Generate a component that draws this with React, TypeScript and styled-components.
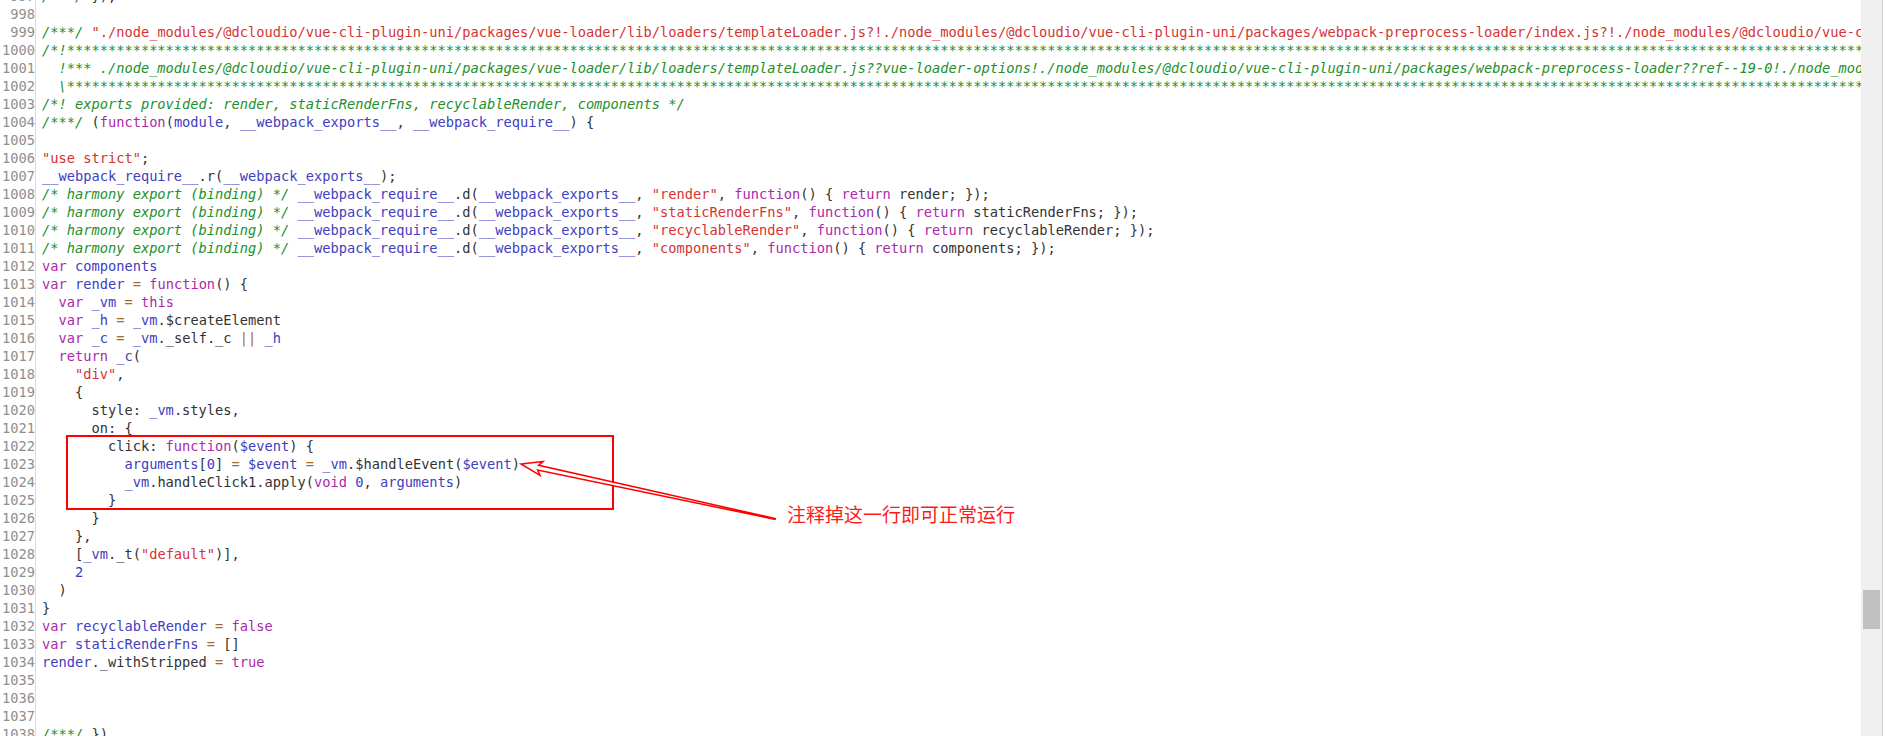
import React from "react";
import styled, { createGlobalStyle } from "styled-components";

type Kind = "p" | "c" | "s" | "k" | "v" | "o" | "n";
type Tok = [Kind, string];

const GlobalStyle = createGlobalStyle`
  html, body { margin: 0; padding: 0; background: #ffffff; overflow: hidden; }
  #root { width: 100vw; height: 100vh; }
`;

const COLORS: Record<Kind, string> = {
  p: "#333333",
  c: "#22902a",
  s: "#d63333",
  k: "#aa2aaa",
  v: "#4040c0",
  o: "#a86a30",
  n: "#3a3acc",
};

const Window = styled.div`
  position: relative;
  display: flex;
  width: 100vw;
  height: 100vh;
  overflow: hidden;
  background: #ffffff;
`;

const Editor = styled.div`
  flex: 1;
  min-width: 0;
  display: flex;
  overflow: hidden;
  font-family: "DejaVu Sans Mono", "Liberation Mono", monospace;
  font-size: 13.7px;
  line-height: 18px;
`;

const Gutter = styled.div`
  flex: 0 0 36px;
  padding-right: 3px;
  box-sizing: border-box;
  width: 36px;
  border-right: 1px solid #dddddd;
  text-align: right;
  color: #8f8f8f;
  white-space: pre;
`;

const CodeCol = styled.div`
  flex: 1;
  min-width: 0;
  padding-left: 6px;
  white-space: pre;
  overflow: hidden;
  color: #333333;
`;

const Lines = styled.div`
  margin-top: -13px;
`;

const LineNo = styled.div`
  height: 18px;
  margin-right: -3px;
`;

const CodeLine = styled.div`
  height: 18px;
`;

const Token = styled.span<{ $k: Kind }>`
  color: ${(p) => COLORS[p.$k]};
  font-style: ${(p) => (p.$k === "c" ? "italic" : "normal")};
`;

const ScrollTrack = styled.div`
  flex: 0 0 21px;
  width: 21px;
  background: #f0f0f0;
  border-right: 1px solid #cdcdcd;
`;

const ScrollThumb = styled.div`
  margin-top: 590px;
  margin-left: 2px;
  width: 17px;
  height: 39px;
  background: #c1c1c1;
`;

const Overlay = styled.div`
  position: absolute;
  inset: 0;
  pointer-events: none;
`;

const MarkBox = styled.div`
  position: absolute;
  left: 66px;
  top: 435px;
  width: 548px;
  height: 75px;
  box-sizing: border-box;
  border: 2px solid #ff0000;
`;

const ArrowSvg = styled.svg`
  position: absolute;
  left: 510px;
  top: 448px;
  overflow: visible;
`;

const Note = styled.div`
  position: absolute;
  left: 787px;
  top: 504px;
  font-family: "Noto Sans CJK SC", "Noto Sans", sans-serif;
  font-size: 19px;
  line-height: 20px;
  color: #ff1a1a;
  white-space: nowrap;
`;

const stars = "*".repeat(260);
const path999 =
  '"./node_modules/@dcloudio/vue-cli-plugin-uni/packages/vue-loader/lib/loaders/templateLoader.js?!./node_modules/@dcloudio/vue-cli-plugin-uni/packages/webpack-preprocess-loader/index.js?!./node_modules/@dcloudio/vue-cli-plugin-uni/packages/vue-loader/lib/index.js?!./src/components/button.vue?vue&type=template":';
const path1001 =
  "  !*** ./node_modules/@dcloudio/vue-cli-plugin-uni/packages/vue-loader/lib/loaders/templateLoader.js??vue-loader-options!./node_modules/@dcloudio/vue-cli-plugin-uni/packages/webpack-preprocess-loader??ref--19-0!./node_modules/@dcloudio/vue-cli-plugin-uni/packages/vue-loader/lib??vue-loader-options!./src/components/button.vue?vue&type=template ***!";

const harmony = (name: string): Tok[] => [
  ["c", "/* harmony export (binding) */"],
  ["p", " "],
  ["v", "__webpack_require__"],
  ["p", ".d("],
  ["v", "__webpack_exports__"],
  ["p", ", "],
  ["s", `"${name}"`],
  ["p", ", "],
  ["k", "function"],
  ["p", "() { "],
  ["k", "return"],
  ["p", ` ${name}; });`],
];

const CODE: Tok[][] = [
  [["c", "/***/"], ["p", " }),"]],
  [],
  [["c", "/***/ "], ["s", path999]],
  [["c", "/*!" + stars]],
  [["c", path1001]],
  [["c", "  \\" + stars]],
  [["c", "/*! exports provided: render, staticRenderFns, recyclableRender, components */"]],
  [
    ["c", "/***/"],
    ["p", " ("],
    ["k", "function"],
    ["p", "("],
    ["v", "module"],
    ["p", ", "],
    ["v", "__webpack_exports__"],
    ["p", ", "],
    ["v", "__webpack_require__"],
    ["p", ") {"],
  ],
  [],
  [["s", '"use strict"'], ["p", ";"]],
  [["v", "__webpack_require__"], ["p", ".r("], ["v", "__webpack_exports__"], ["p", ");"]],
  harmony("render"),
  harmony("staticRenderFns"),
  harmony("recyclableRender"),
  harmony("components"),
  [["k", "var"], ["p", " "], ["v", "components"]],
  [["k", "var"], ["p", " "], ["v", "render"], ["p", " "], ["o", "="], ["p", " "], ["k", "function"], ["p", "() {"]],
  [["p", "  "], ["k", "var"], ["p", " "], ["v", "_vm"], ["p", " "], ["o", "="], ["p", " "], ["k", "this"]],
  [["p", "  "], ["k", "var"], ["p", " "], ["v", "_h"], ["p", " "], ["o", "="], ["p", " "], ["v", "_vm"], ["p", ".$createElement"]],
  [
    ["p", "  "],
    ["k", "var"],
    ["p", " "],
    ["v", "_c"],
    ["p", " "],
    ["o", "="],
    ["p", " "],
    ["v", "_vm"],
    ["p", "._self._c "],
    ["o", "||"],
    ["p", " "],
    ["v", "_h"],
  ],
  [["p", "  "], ["k", "return"], ["p", " "], ["v", "_c"], ["p", "("]],
  [["p", "    "], ["s", '"div"'], ["p", ","]],
  [["p", "    {"]],
  [["p", "      style: "], ["v", "_vm"], ["p", ".styles,"]],
  [["p", "      on: {"]],
  [["p", "        click: "], ["k", "function"], ["p", "("], ["v", "$event"], ["p", ") {"]],
  [
    ["p", "          "],
    ["v", "arguments"],
    ["p", "["],
    ["n", "0"],
    ["p", "] "],
    ["o", "="],
    ["p", " "],
    ["v", "$event"],
    ["p", " "],
    ["o", "="],
    ["p", " "],
    ["v", "_vm"],
    ["p", ".$handleEvent("],
    ["v", "$event"],
    ["p", ")"],
  ],
  [
    ["p", "          "],
    ["v", "_vm"],
    ["p", ".handleClick1.apply("],
    ["k", "void"],
    ["p", " "],
    ["n", "0"],
    ["p", ", "],
    ["v", "arguments"],
    ["p", ")"],
  ],
  [["p", "        }"]],
  [["p", "      }"]],
  [["p", "    },"]],
  [["p", "    ["], ["v", "_vm"], ["p", "._t("], ["s", '"default"'], ["p", ")],"]],
  [["p", "    "], ["n", "2"]],
  [["p", "  )"]],
  [["p", "}"]],
  [["k", "var"], ["p", " "], ["v", "recyclableRender"], ["p", " "], ["o", "="], ["p", " "], ["k", "false"]],
  [["k", "var"], ["p", " "], ["v", "staticRenderFns"], ["p", " "], ["o", "="], ["p", " []"]],
  [["v", "render"], ["p", "._withStripped "], ["o", "="], ["p", " "], ["k", "true"]],
  [],
  [],
  [],
  [["c", "/***/"], ["p", " }),"]],
];

const FIRST = 997;

export default function App() {
  return (
    <>
      <GlobalStyle />
      <Window>
        <Editor>
          <Gutter>
            <Lines>
              {CODE.map((_, i) => (
                <LineNo key={i}>{FIRST + i}</LineNo>
              ))}
            </Lines>
          </Gutter>
          <CodeCol>
            <Lines>
              {CODE.map((toks, i) => (
                <CodeLine key={i}>
                  {toks.length === 0
                    ? " "
                    : toks.map(([k, t], j) => (
                        <Token key={j} $k={k}>
                          {t}
                        </Token>
                      ))}
                </CodeLine>
              ))}
            </Lines>
          </CodeCol>
        </Editor>
        <ScrollTrack>
          <ScrollThumb />
        </ScrollTrack>
        <Overlay>
          <MarkBox />
          <ArrowSvg width="280" height="80" viewBox="0 0 280 80">
            <g transform="translate(11,16) rotate(12.2)">
              <polygon
                points="0,0 21,-7 17.5,-2.4 260,-0.4 260,0.4 17.5,2.4 21,7"
                fill="#ffffff"
                stroke="#ff0000"
                strokeWidth="1.5"
                strokeLinejoin="miter"
              />
            </g>
          </ArrowSvg>
          <Note>注释掉这一行即可正常运行</Note>
        </Overlay>
      </Window>
    </>
  );
}
